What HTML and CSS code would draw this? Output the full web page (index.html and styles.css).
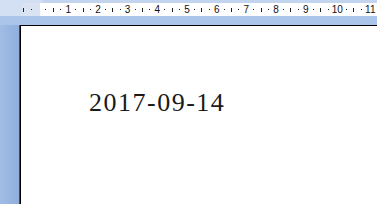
FILE: index.html
```html
<!DOCTYPE html>
<html lang="zh-CN">
<head>
  <meta charset="UTF-8">
  <title>文档</title>
  <link rel="stylesheet" href="styles.css">
</head>
<body>

<div class="top">
  <div class="ruler">
    <i class="l"></i><i class="d"></i><i></i>
    <i class="d"></i><i class="l"></i><i class="d"></i><b>1</b>
    <i class="d"></i><i class="l"></i><i class="d"></i><b>2</b>
    <i class="d"></i><i class="l"></i><i class="d"></i><b>3</b>
    <i class="d"></i><i class="l"></i><i class="d"></i><b>4</b>
    <i class="d"></i><i class="l"></i><i class="d"></i><b>5</b>
    <i class="d"></i><i class="l"></i><i class="d"></i><b>6</b>
    <i class="d"></i><i class="l"></i><i class="d"></i><b>7</b>
    <i class="d"></i><i class="l"></i><i class="d"></i><b>8</b>
    <i class="d"></i><i class="l"></i><i class="d"></i><b>9</b>
    <i class="d"></i><i class="l"></i><i class="d"></i><b>10</b>
    <i class="d"></i><i class="l"></i><i class="d"></i><b>11</b>
    <i class="d"></i><i class="l"></i><i class="d"></i>
  </div>
</div>

<div class="main">
  <div class="side"></div>
  <div class="page">
    <p class="date">2017-09-14</p>
  </div>
</div>

</body>
</html>
```

FILE: styles.css
```css
body {
  margin: 0;
  width: 377px;
  height: 204px;
  overflow: hidden;
  background-color: #c3d5ee;
  background-image: radial-gradient(ellipse 60px 26px at 0 0, #d3e0f3 70%, transparent 72%);
}

.top {
  height: 25px;
  padding-top: 3px;
  box-sizing: border-box;
  background: linear-gradient(to bottom, transparent 16px, #abc4e9 16px);
}

.ruler {
  height: 13px;
  margin-left: 20px;
  display: flex;
  overflow: hidden;
  white-space: nowrap;
  background: linear-gradient(to right, transparent 2px, #d9e3f2 2px, #d9e3f2 20px, #ffffff 20px);
}

.ruler i,
.ruler b {
  flex: 0 0 7.425px;
  display: flex;
  align-items: center;
  justify-content: center;
  font-style: normal;
}

/* small dot */
.ruler i.d::before {
  content: '';
  width: 1px;
  height: 1px;
  background-color: #222;
}

/* half cm tick */
.ruler i.l::before {
  content: '';
  width: 1px;
  height: 4px;
  background-color: #222;
}

.ruler b {
  font-family: "Liberation Sans", Arial, sans-serif;
  font-weight: normal;
  font-size: 10px;
  color: #111;
}

.main {
  display: flex;
  height: 179px;
}

.side {
  width: 20px;
  background: linear-gradient(to right, #a2bde5, #8eaedc);
}

.page {
  flex: 1;
  background-color: #ffffff;
  border-left: 1px solid #000;
  border-top: 1px solid #000;
  box-shadow: -1px 0 0 #3d4a5e;
  padding: 64px 0 0 68px;
}

.date {
  margin: 0;
  font-family: "Liberation Serif", "Times New Roman", serif;
  font-size: 26px;
  line-height: 26px;
  letter-spacing: 1.5px;
  color: #1a1a1a;
}
```
